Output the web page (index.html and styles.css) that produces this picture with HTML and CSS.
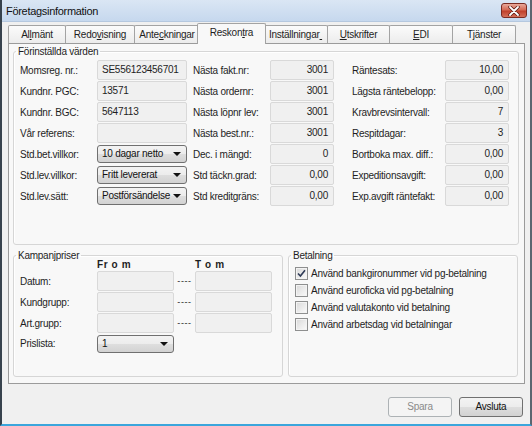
FILE: index.html
```html
<!DOCTYPE html>
<html lang="sv">
<head>
	<meta charset="UTF-8">
	<title>Företagsinformation</title>
	<link rel="stylesheet" href="styles.css">
</head>
<body>
	<div class="window">
		<div class="titlebar">
			<span class="title">Företagsinformation</span>
			<span class="close">
				<svg width="12" height="10" viewBox="0 0 12 10">
					<path d="M2 1 L10 9 M10 1 L2 9" stroke="#5a1a14" stroke-width="3.4" stroke-linecap="round"/>
					<path d="M2 1 L10 9 M10 1 L2 9" stroke="#fff" stroke-width="1.8" stroke-linecap="round"/>
				</svg>
			</span>
		</div>
		<div class="client">
			<div class="tabs">
				<div class="tab w58">Al<u>l</u>mänt</div>
				<div class="tab w70">Redo<u>v</u>isning</div>
				<div class="tab w66">Ante<u>c</u>kningar</div>
				<div class="tab w64 active">Reskon<u>t</u>ra</div>
				<div class="tab w65">Inställningar<u>&nbsp;</u></div>
				<div class="tab w63"><u>U</u>tskrifter</div>
				<div class="tab w64"><u>E</u>DI</div>
				<div class="tab w64">T<u>j</u>änster</div>
			</div>
			<div class="panel">
				<fieldset class="group presets">
					<legend>Förinställda värden</legend>
					<div class="preset-grid">
						<span>Momsreg. nr.:</span>
						<div class="field">SE556123456701</div>
						<span class="lbl-mid">Nästa fakt.nr:</span>
						<div class="field num">3001</div>
						<span class="lbl-right">Räntesats:</span>
						<div class="field num">10,00</div>

						<span>Kundnr. PGC:</span>
						<div class="field">13571</div>
						<span class="lbl-mid">Nästa ordernr:</span>
						<div class="field num">3001</div>
						<span class="lbl-right">Lägsta räntebelopp:</span>
						<div class="field num">0,00</div>

						<span>Kundnr. BGC:</span>
						<div class="field">5647113</div>
						<span class="lbl-mid">Nästa löpnr lev:</span>
						<div class="field num">3001</div>
						<span class="lbl-right">Kravbrevsintervall:</span>
						<div class="field num">7</div>

						<span>Vår referens:</span>
						<div class="field"></div>
						<span class="lbl-mid">Nästa best.nr.:</span>
						<div class="field num">3001</div>
						<span class="lbl-right">Respitdagar:</span>
						<div class="field num">3</div>

						<span>Std.bet.villkor:</span>
						<div class="combo">10 dagar netto<i class="arrow"></i></div>
						<span class="lbl-mid">Dec. i mängd:</span>
						<div class="field num">0</div>
						<span class="lbl-right">Bortboka max. diff.:</span>
						<div class="field num">0,00</div>

						<span>Std.lev.villkor:</span>
						<div class="combo">Fritt levererat<i class="arrow"></i></div>
						<span class="lbl-mid">Std täckn.grad:</span>
						<div class="field num">0,00</div>
						<span class="lbl-right">Expeditionsavgift:</span>
						<div class="field num">0,00</div>

						<span>Std.lev.sätt:</span>
						<div class="combo">Postförsändelse<i class="arrow"></i></div>
						<span class="lbl-mid">Std kreditgräns:</span>
						<div class="field num">0,00</div>
						<span class="lbl-right">Exp.avgift räntefakt:</span>
						<div class="field num">0,00</div>
					</div>
				</fieldset>
				<div class="lower">
					<fieldset class="group campaign">
						<legend>Kampanjpriser</legend>
						<div class="campaign-grid">
							<span></span>
							<span class="col-head">Fr o m</span>
							<span></span>
							<span class="col-head">T o m</span>

							<span>Datum:</span>
							<div class="field"></div>
							<span class="dash">----</span>
							<div class="field"></div>

							<span>Kundgrupp:</span>
							<div class="field"></div>
							<span class="dash">----</span>
							<div class="field"></div>

							<span>Art.grupp:</span>
							<div class="field"></div>
							<span class="dash">----</span>
							<div class="field"></div>

							<span>Prislista:</span>
							<div class="combo">1<i class="arrow"></i></div>
						</div>
					</fieldset>
					<fieldset class="group payment">
						<legend>Betalning</legend>
						<div class="check-row">
							<span class="box">
								<svg width="11" height="11" viewBox="0 0 11 11"><path d="M2 5.5 L4.4 8 L9 2.2" fill="none" stroke="#2f3b57" stroke-width="1.6"/></svg>
							</span>
							Använd bankgironummer vid pg-betalning
						</div>
						<div class="check-row"><span class="box"></span>Använd euroficka vid pg-betalning</div>
						<div class="check-row"><span class="box"></span>Använd valutakonto vid betalning</div>
						<div class="check-row"><span class="box"></span>Använd arbetsdag vid betalningar</div>
					</fieldset>
				</div>
			</div>
			<div class="actions">
				<div class="btn disabled">Spara</div>
				<div class="btn">Avsluta</div>
			</div>
		</div>
	</div>
</body>
</html>
```

FILE: styles.css
```css
* {
	box-sizing: border-box;
}
body {
	margin: 0;
	background: #fff;
	font-family: "Liberation Sans", Arial, sans-serif;
	font-size: 10px;
	letter-spacing: -0.25px;
	color: #1e1e1e;
}
u {
	text-decoration: underline;
}

/* window frame */
.window {
	width: 532px;
	height: 426px;
	display: flex;
	flex-direction: column;
	background: #f0f0f0;
	border-left: 2px solid #37424d;
	border-right: 2px solid #5c6670;
	border-bottom: 2px solid #3ba6dc;
}
.titlebar {
	height: 22px;
	display: flex;
	align-items: center;
	padding: 0 3px 0 4px;
	background: linear-gradient(#dae6f4, #c6d8ee);
	border-bottom: 1px solid #b5c8df;
}
.title {
	flex: 1;
	font-size: 11px;
	letter-spacing: -0.3px;
	color: #111;
}
.close {
	width: 26px;
	height: 15px;
	display: flex;
	align-items: center;
	justify-content: center;
	border: 1px solid #7a2b22;
	border-radius: 3px;
	background: linear-gradient(#e9a99b 0%, #d56a55 45%, #c0402b 55%, #d4705a 100%);
}
.client {
	flex: 1;
	padding: 1px 5px 0 6px;
}

/* tabs */
.tabs {
	height: 20px;
	display: flex;
	align-items: flex-end;
}
.tab {
	height: 18px;
	margin-right: -1px;
	border: 1px solid #a3a3a3;
	border-bottom: 0;
	border-radius: 2px 2px 0 0;
	background: linear-gradient(#fbfbfb, #ececec);
	text-align: center;
	line-height: 17px;
	white-space: nowrap;
}
.tab.active {
	position: relative;
	z-index: 1;
	height: 21px;
	margin: 0 -3px -1px -2px;
	background: #f8f8f8;
	line-height: 18px;
}
.w58 { width: 58px; }
.w63 { width: 63px; }
.w64 { width: 64px; }
.w65 { width: 65px; }
.w66 { width: 66px; }
.w70 { width: 70px; }
.tab.active.w64 { width: 69px; }

.panel {
	height: 341px;
	padding: 1px 5px 0 4px;
	border: 1px solid #9b9b9b;
	background: #f8f8f8;
}

/* group boxes */
.group {
	margin: 0;
	border: 1px solid #d6d6d6;
	border-radius: 3px;
	box-shadow: inset 1px 1px 0 #fff;
}
.group legend {
	margin-left: -4px;
	padding: 0 2px;
	line-height: 13px;
}
.presets {
	height: 200px;
	padding: 2px 0 0 6px;
}
.preset-grid {
	display: grid;
	grid-template-columns: 77px 90px 83px 64px 111px 64px;
	grid-auto-rows: 20px;
	row-gap: 1px;
	align-items: center;
}
.lbl-mid {
	padding-left: 6px;
}
.lbl-right {
	padding-left: 18px;
}

.field {
	height: 20px;
	padding: 0 4px;
	border: 1px solid #d9d9d9;
	border-radius: 2px;
	background: #f0f0f0;
	line-height: 17px;
	white-space: nowrap;
}
.field.num {
	text-align: right;
	padding-right: 5px;
}
.combo {
	position: relative;
	height: 18px;
	padding-left: 4px;
	border: 1px solid #707070;
	border-radius: 3px;
	background: linear-gradient(#f3f3f3 0%, #ececec 50%, #dedede 50%, #d2d2d2 100%);
	line-height: 16px;
	color: #111;
}
.arrow {
	position: absolute;
	right: 5px;
	top: 6px;
	border-left: 4px solid transparent;
	border-right: 4px solid transparent;
	border-top: 4px solid #111;
}

.lower {
	display: flex;
	gap: 5px;
	margin-top: 4px;
}
.campaign {
	width: 270px;
	height: 128px;
	padding: 0 0 0 6px;
}
.campaign-grid {
	display: grid;
	grid-template-columns: 77px 77px 21px 77px;
	grid-template-rows: 8px 20px 20px 20px 18px;
	row-gap: 1px;
	align-items: center;
}
.campaign-grid .combo {
	margin-top: 2px;
}
.col-head {
	font-weight: bold;
	letter-spacing: 0.6px;
	line-height: 8px;
	margin-top: -3px;
}
.dash {
	text-align: center;
	letter-spacing: 0.6px;
	font-size: 9px;
}

.payment {
	width: 230px;
	height: 128px;
	padding: 3px 0 0 6px;
}
.check-row {
	height: 17px;
	display: flex;
	align-items: center;
	gap: 3px;
	white-space: nowrap;
}
.box {
	width: 13px;
	height: 13px;
	display: flex;
	align-items: center;
	justify-content: center;
	border: 1px solid #8e8f8f;
	background: linear-gradient(135deg, #d8d8d8, #fbfbfb);
	box-shadow: inset 0 0 0 1px #f3f3f3;
}

/* buttons */
.actions {
	display: flex;
	justify-content: flex-end;
	gap: 7px;
	margin: 13px 2px 0 0;
}
.btn {
	width: 64px;
	height: 20px;
	border: 1px solid #707070;
	border-radius: 3px;
	background: linear-gradient(#f3f3f3 0%, #ececec 50%, #dedede 50%, #d2d2d2 100%);
	text-align: center;
	line-height: 18px;
	color: #111;
}
.btn.disabled {
	border-color: #adb2b5;
	background: #f4f4f4;
	color: #8a8a8a;
}
```
